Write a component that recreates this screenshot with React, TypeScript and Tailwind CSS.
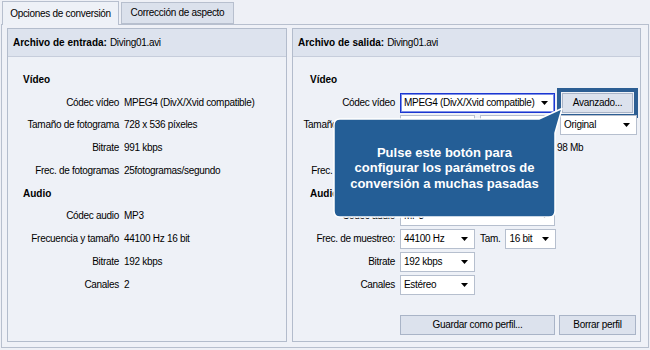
import React from 'react'

const Arrow = () => (
  <svg width="7" height="4" viewBox="0 0 7 4" className="shrink-0">
    <path d="M0 0H7L3.5 4Z" fill="#000" />
  </svg>
)

interface SelProps {
  value: string
  w: string
  focused?: boolean
}

const Sel: React.FC<SelProps> = ({ value, w, focused }) => (
  <div
    className={
      'h-[20px] flex items-center justify-between pl-[3px] pr-[6px] bg-white border shrink-0 ' +
      w +
      (focused ? ' border-[#1b36d2] shadow-[inset_0_0_0_1px_#7d90e6]' : ' border-[#b6bfce]')
    }
  >
    <span className="whitespace-nowrap">{value}</span>
    <Arrow />
  </div>
)

const Btn = ({ label, w }: { label: string; w: string }) => (
  <div className={'h-[20px] flex items-center justify-center bg-[#dce2ed] border border-[#a9b4c7] ' + w}>
    {label}
  </div>
)

const leftRows: [string, string][] = [
  ['Códec vídeo', 'MPEG4 (DivX/Xvid compatible)'],
  ['Tamaño de fotograma', '728 x 536 píxeles'],
  ['Bitrate', '991 kbps'],
  ['Frec. de fotogramas', '25fotogramas/segundo'],
]
const leftAudio: [string, string][] = [
  ['Códec audio', 'MP3'],
  ['Frecuencia y tamaño', '44100 Hz 16 bit'],
  ['Bitrate', '192 kbps'],
  ['Canales', '2'],
]

const Row = ({ label, children, lw }: { label: string; children: React.ReactNode; lw: string }) => (
  <div className="h-[22.75px] flex items-center">
    <div className={'text-right whitespace-nowrap shrink-0 ' + lw}>{label}</div>
    <div className="flex items-center gap-[5px] ml-[5px]">{children}</div>
  </div>
)

const Section = ({ title, pl }: { title: string; pl: string }) => (
  <div className={'h-[22.75px] flex items-center font-bold tracking-normal ' + pl}>{title}</div>
)

export default function App() {
  return (
    <div className="relative w-[650px] h-[350px] overflow-hidden bg-[#eef0f6] text-[10px] leading-none tracking-[-0.3px] text-black font-['Liberation_Sans',Arial,sans-serif]">
      {/* tabs */}
      <div className="h-[24px] flex items-end pl-[2px]">
        <div className="relative z-10 -mb-px h-[24px] w-[117px] flex items-center justify-center bg-[#eef1f7] border border-b-0 border-[#b7bfce]">
          Opciones de conversión
        </div>
        <div className="ml-[2px] h-[22px] w-[113px] flex items-center justify-center bg-[#dbe1ec] border border-[#b7bfce]">
          Corrección de aspecto
        </div>
      </div>

      {/* content */}
      <div className="mx-[1px] h-[324px] border border-[#b7bfce] bg-[#eff1f7] pl-[5px] pr-[7px] pt-[3px] pb-[5px] flex gap-[5px]">
        {/* left panel */}
        <div className="w-[280px] border border-[#b3bccc] bg-[#eef1f7] flex flex-col">
          <div className="h-[28px] shrink-0 bg-[#dde3ee] border-b border-[#c6cddb] px-[5px] flex items-center">
            <span className="font-bold tracking-normal">Archivo de entrada:</span>
            <span className="ml-[3px]">Diving01.avi</span>
          </div>
          <div className="pt-[11.5px]">
            <Section title="Vídeo" pl="pl-[15px]" />
            {leftRows.map(([l, v]) => (
              <Row key={l} label={l} lw="w-[111px]">
                <span className="whitespace-nowrap">{v}</span>
              </Row>
            ))}
            <Section title="Audio" pl="pl-[15px]" />
            {leftAudio.map(([l, v]) => (
              <Row key={l + v} label={l} lw="w-[111px]">
                <span className="whitespace-nowrap">{v}</span>
              </Row>
            ))}
          </div>
        </div>

        {/* right panel */}
        <div className="flex-1 border border-[#b3bccc] bg-[#eef1f7] flex flex-col">
          <div className="h-[28px] shrink-0 bg-[#dde3ee] border-b border-[#c6cddb] px-[5px] flex items-center">
            <span className="font-bold tracking-normal">Archivo de salida:</span>
            <span className="ml-[3px]">Diving01.avi</span>
          </div>
          <div className="pt-[11.5px]">
            <Section title="Vídeo" pl="pl-[17px]" />
            <Row label="Códec vídeo" lw="w-[102px]">
              <Sel value="MPEG4 (DivX/Xvid compatible)" w="w-[155px]" focused />
              <div className="-my-[4px] -ml-[3px] border-[4px] border-[#2c5e93] p-px">
                <Btn label="Avanzado..." w="w-[71px]" />
              </div>
            </Row>
            <Row label="Tamaño de fotograma" lw="w-[102px]">
              <Sel value="" w="w-[75px]" />
              <Sel value="" w="w-[75px]" />
              <Sel value="Original" w="w-[77px]" />
            </Row>
            <Row label="Bitrate" lw="w-[102px]">
              <Sel value="" w="w-[75px]" />
              <span className="ml-[77px] whitespace-nowrap">98 Mb</span>
            </Row>
            <Row label="Frec. de fotogramas" lw="w-[102px]">
              <Sel value="" w="w-[75px]" />
            </Row>
            <Section title="Audio" pl="pl-[17px]" />
            <Row label="Códec audio" lw="w-[102px]">
              <Sel value="MP3" w="w-[155px]" />
            </Row>
            <Row label="Frec. de muestreo:" lw="w-[102px]">
              <Sel value="44100 Hz" w="w-[75px]" />
              <span>Tam.</span>
              <Sel value="16 bit" w="w-[51px]" />
            </Row>
            <Row label="Bitrate" lw="w-[102px]">
              <Sel value="192 kbps" w="w-[75px]" />
            </Row>
            <Row label="Canales" lw="w-[102px]">
              <Sel value="Estéreo" w="w-[75px]" />
            </Row>
            <div className="mt-[19px] ml-[107px] flex gap-[4px]">
              <Btn label="Guardar como perfil..." w="w-[155px]" />
              <Btn label="Borrar perfil" w="w-[77px]" />
            </div>
          </div>
        </div>
      </div>

      {/* callout */}
      <svg className="absolute left-0 top-0 pointer-events-none" width="650" height="350" viewBox="0 0 650 350">
        <path
          d="M340 119 H539 L562 108.5 L555 133 V211 Q555 217 549 217 H340 Q334 217 334 211 V125 Q334 119 340 119 Z"
          fill="#245e96"
          stroke="#ffffff"
          strokeWidth="1.5"
          strokeLinejoin="round"
        />
      </svg>
      <div className="absolute left-[334px] top-[119px] w-[221px] h-[98px] flex items-center justify-center text-center text-white font-bold text-[13px] leading-[15.5px] tracking-normal">
        <div>
          Pulse este botón para
          <br />
          configurar los parámetros de
          <br />
          conversión a muchas pasadas
        </div>
      </div>
    </div>
  )
}
